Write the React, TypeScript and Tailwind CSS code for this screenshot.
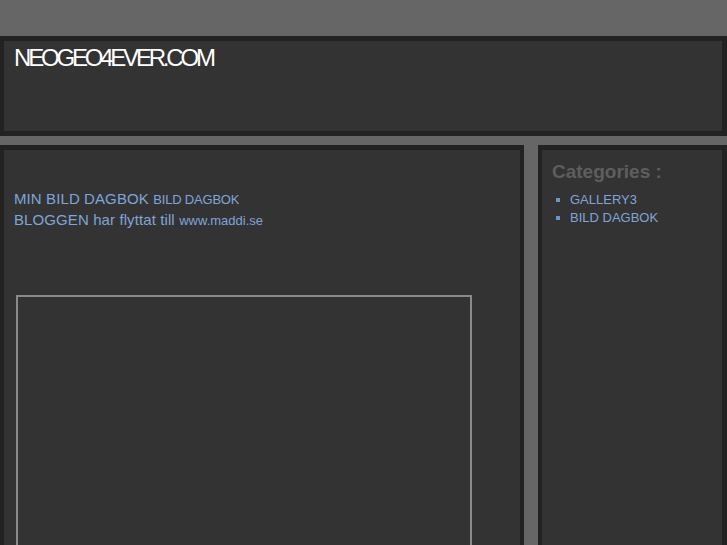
export default function App() {
  const categories = ['GALLERY3', 'BILD DAGBOK'];

  return (
    <div className="min-h-[545px] bg-[#666666] pt-[36px] font-['Liberation_Sans',Arial,sans-serif] overflow-hidden">
      {/* Header */}
      <header className="h-[100px] border-[#222222] border-t-[5px] border-b-[5px] border-l-4 border-r-[5px] bg-[#333333] pl-[10px] pt-[3px]">
        <h1 className="text-[24px] leading-[28px] text-white tracking-[-3.2px] font-normal">NEOGEO4EVER.COM</h1>
      </header>

      {/* Columns */}
      <div className="mt-[9px] flex gap-[14px]">
        <main className="w-[524px] h-[420px] shrink-0 border-[#222222] border-t-[5px] border-l-4 border-r-4 bg-[#333333] pl-[10px] pt-[39px]">
          <div className="text-[#7fa5d8] leading-[20px]">
            <p>
              <span className="text-[15px] tracking-[0.1px]">MIN BILD DAGBOK</span>{' '}
              <span className="text-[13px] tracking-[-0.2px]">BILD DAGBOK</span>
            </p>
            <p>
              <span className="text-[15px] tracking-[0.1px]">BLOGGEN har flyttat till</span>{' '}
              <span className="text-[13px]">www.maddi.se</span>
            </p>
          </div>
          <div className="ml-[2px] mt-[64px] w-[456px] h-[300px] border-2 border-[#8a8a8a]" />
        </main>

        <aside className="flex-1 h-[420px] border-[#222222] border-t-[5px] border-l-4 border-r-[5px] bg-[#333333] pl-[10px] pt-[11px]">
          <h2 className="text-[19px] leading-[22px] font-bold text-[#5e5e5e]">Categories :</h2>
          <ul className="mt-[8px]">
            {categories.map((c) => (
              <li key={c} className="flex items-center text-[13px] leading-[18px] text-[#7fa5d8]">
                <span className="ml-[4px] w-[4px] h-[4px] bg-[#6f93c4] shrink-0" />
                <span className="ml-[10px]">{c}</span>
              </li>
            ))}
          </ul>
        </aside>
      </div>
    </div>
  );
}
